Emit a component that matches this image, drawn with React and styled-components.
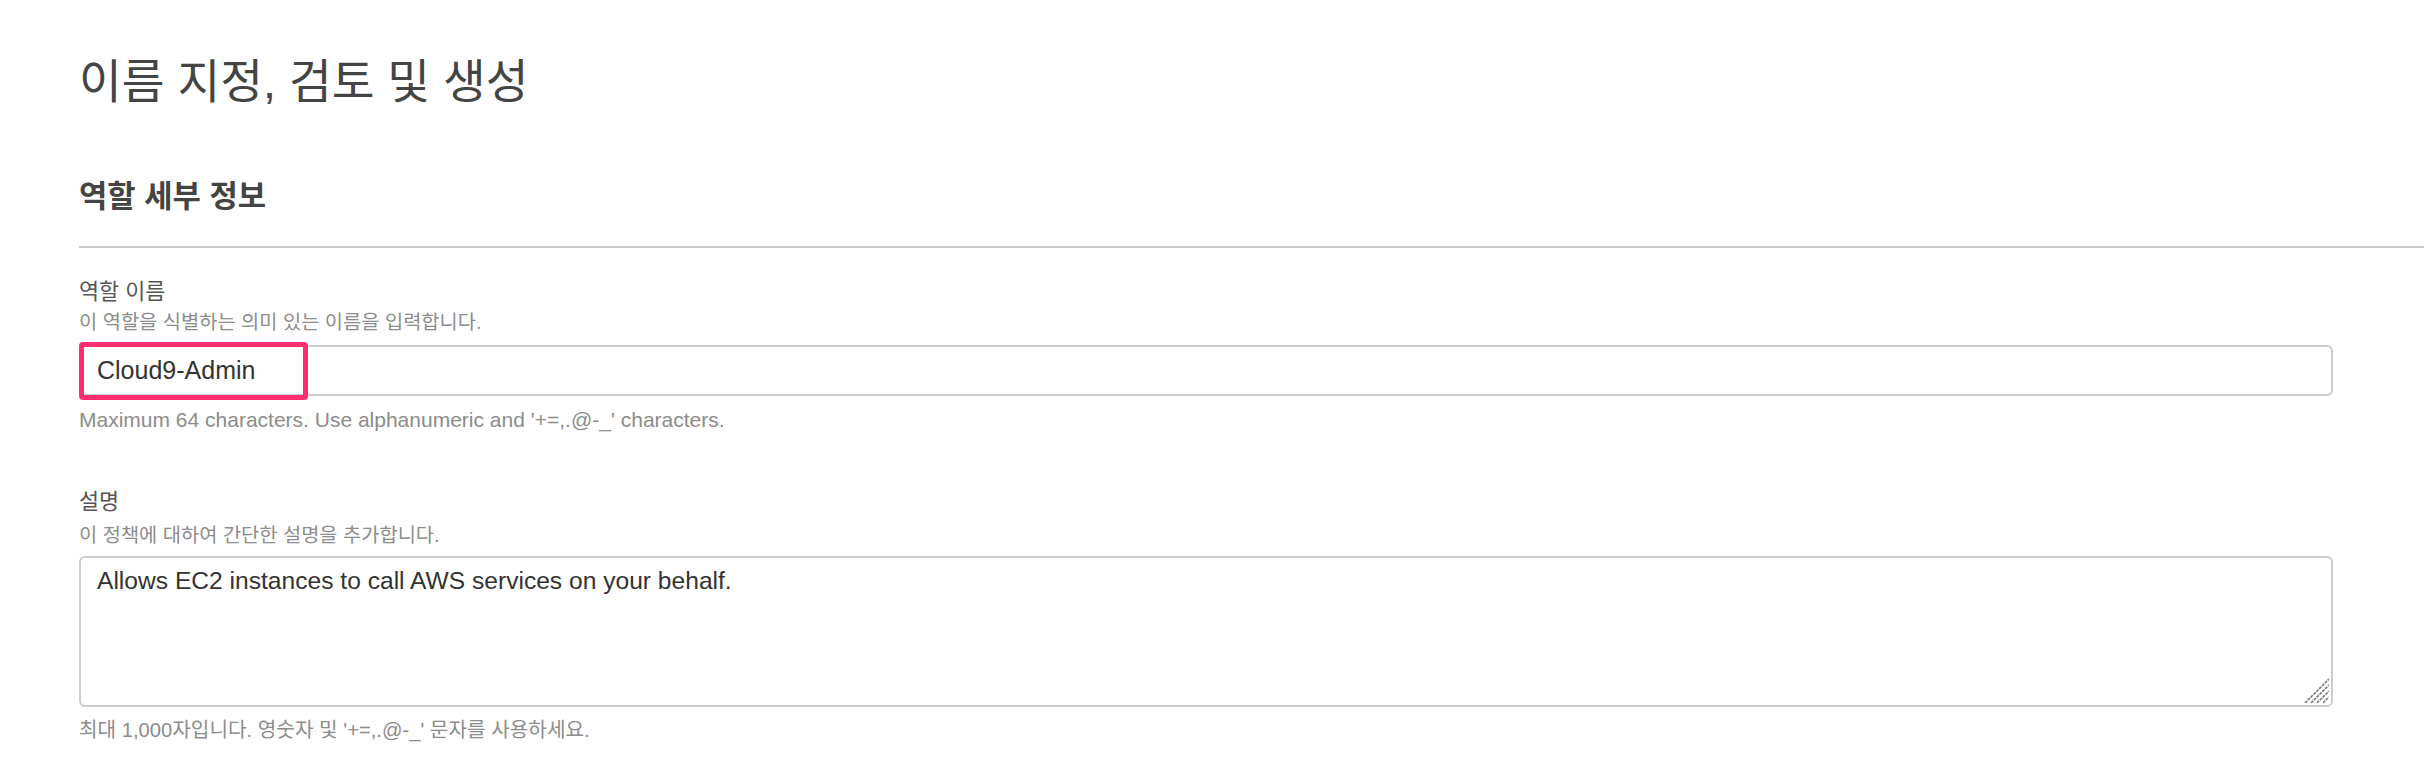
import React from 'react'
import styled, { createGlobalStyle } from 'styled-components'

const GlobalStyle = createGlobalStyle`
  body {
    margin: 0;
    background: #fff;
    font-family: "Liberation Sans", "Noto Sans CJK KR", sans-serif;
  }
`

const FONT = `"Liberation Sans", "Noto Sans CJK KR", sans-serif`

const Page = styled.div`
  padding: 54px 0 20px 79px;
`

const Title = styled.h1`
  margin: 0;
  font-size: 46.5px;
  line-height: 56px;
  font-weight: 400;
  color: #444;
`

const SectionTitle = styled.h2`
  margin: 68px 0 0;
  font-size: 30.8px;
  line-height: 38px;
  font-weight: 700;
  color: #444;
`

const Divider = styled.hr`
  margin: 30px 0 0;
  border: 0;
  height: 2px;
  background: #cccccc;
`

const Field = styled.div`
  display: flex;
  flex-direction: column;
  margin-top: ${(p) => p.$gap}px;
  padding-right: 91px;
`

const Label = styled.label`
  font-size: 21.8px;
  line-height: 30px;
  color: #555;
`

const Description = styled.div`
  margin-top: ${(p) => p.$offset || 0}px;
  font-size: 19.8px;
  line-height: 30px;
  color: #8c8c8c;
`

const Hint = styled.div`
  margin-top: ${(p) => p.$offset}px;
  font-size: ${(p) => p.$size}px;
  line-height: 28px;
  color: #8c8c8c;
`

const ControlWrap = styled.div`
  position: relative;
  margin-top: ${(p) => p.$offset}px;
`

const TextInput = styled.input`
  display: block;
  width: 100%;
  height: 51px;
  box-sizing: border-box;
  padding: 0 16px;
  border: 2px solid #cccccc;
  border-radius: 6px;
  font-family: ${FONT};
  font-size: 25px;
  color: #333;
  background: #fff;
  outline: none;
`

const TextArea = styled.textarea`
  display: block;
  width: 100%;
  height: 151px;
  box-sizing: border-box;
  padding: 8px 16px;
  border: 2px solid #cccccc;
  border-radius: 6px;
  font-family: ${FONT};
  font-size: 24.6px;
  line-height: 30px;
  color: #333;
  background: #fff;
  resize: none;
  outline: none;
`

// annotation box drawn over the role name
const Highlight = styled.div`
  position: absolute;
  top: -3px;
  left: 0;
  width: 229px;
  height: 58px;
  box-sizing: border-box;
  border: 5px solid #ff2e6e;
  border-radius: 4px;
  pointer-events: none;
`

const Grip = styled.svg`
  position: absolute;
  right: 4px;
  bottom: 4px;
  width: 25px;
  height: 25px;
  pointer-events: none;
`

const ResizeGrip = () => (
  <Grip viewBox="0 0 25 25">
    <g stroke="#777" strokeWidth="1.6" strokeDasharray="3 1">
      <line x1="1" y1="25" x2="25" y2="1" />
      <line x1="7" y1="25" x2="25" y2="7" />
      <line x1="13" y1="25" x2="25" y2="13" />
      <line x1="19" y1="25" x2="25" y2="19" />
    </g>
  </Grip>
)

const App = () => (
  <Page>
    <GlobalStyle />
    <Title>이름 지정, 검토 및 생성</Title>
    <SectionTitle>역할 세부 정보</SectionTitle>
    <Divider />

    <Field $gap={29}>
      <Label>역할 이름</Label>
      <Description>이 역할을 식별하는 의미 있는 이름을 입력합니다.</Description>
      <ControlWrap $offset={8}>
        <TextInput readOnly defaultValue="Cloud9-Admin" />
        <Highlight />
      </ControlWrap>
      <Hint $offset={10} $size={21}>
        Maximum 64 characters. Use alphanumeric and '+=,.@-_' characters.
      </Hint>
    </Field>

    <Field $gap={53}>
      <Label>설명</Label>
      <Description $offset={3}>이 정책에 대하여 간단한 설명을 추가합니다.</Description>
      <ControlWrap $offset={6}>
        <TextArea readOnly defaultValue="Allows EC2 instances to call AWS services on your behalf." />
        <ResizeGrip />
      </ControlWrap>
      <Hint $offset={9} $size={20.2}>
        최대 1,000자입니다. 영숫자 및 '+=,.@-_' 문자를 사용하세요.
      </Hint>
    </Field>
  </Page>
)

export default App
